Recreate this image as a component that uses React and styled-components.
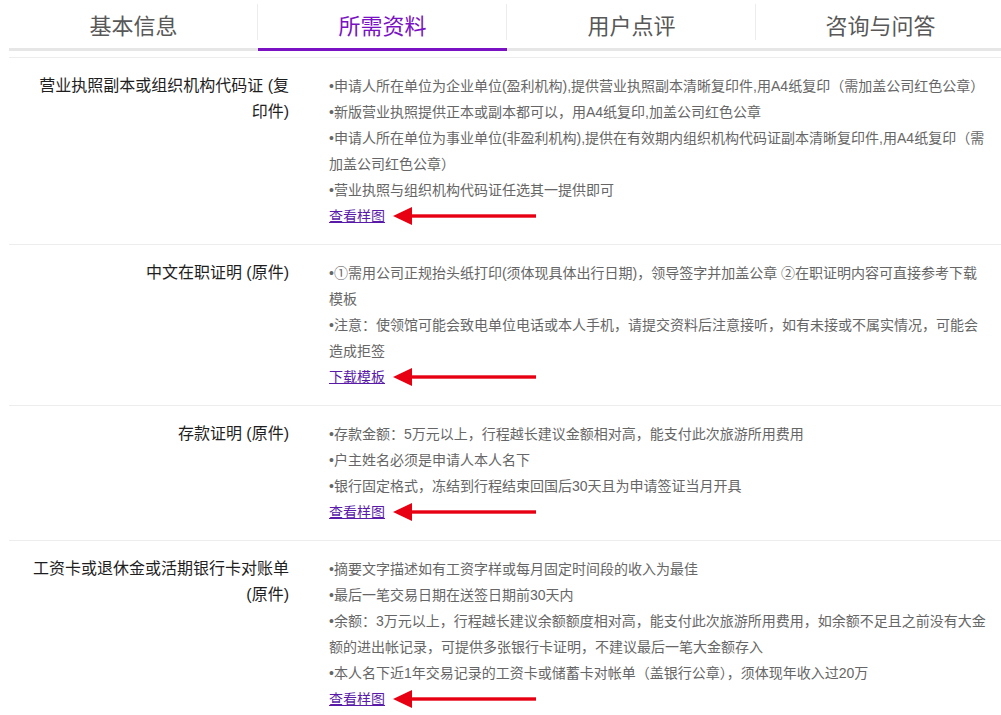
import React from "react";
import styled, { createGlobalStyle } from "styled-components";

const Global = createGlobalStyle`
  html, body { margin: 0; padding: 0; background: #fff; overflow-x: hidden; }
  body { font-family: "Liberation Sans", "Noto Sans CJK SC", sans-serif; }
`;

const Page = styled.div`
  padding-left: 9px;
  width: 996px;
`;

const Tabs = styled.div`
  display: grid;
  grid-template-columns: repeat(4, 1fr);
`;

const Tab = styled.div`
  position: relative;
  height: 48px;
  display: flex;
  align-items: center;
  justify-content: center;
  font-size: 22px;
  color: ${(p) => (p.$active ? "#7a12c4" : "#585858")};
  border-bottom: 3px solid ${(p) => (p.$active ? "#7a12c4" : "#e6e6e6")};
  font-family: "Noto Sans CJK SC", sans-serif;
  &::after {
    content: "";
    display: ${(p) => (p.$last ? "none" : "block")};
    position: absolute;
    right: 0;
    top: 4px;
    height: 36px;
    width: 1px;
    background: #ececec;
  }
`;

const List = styled.div`
  margin-top: 6px;
`;

const Row = styled.div`
  display: grid;
  grid-template-columns: 280px 658px;
  column-gap: 40px;
  padding: 15px 0;
  border-top: 1px solid #ededed;
`;

const Label = styled.div`
  padding-left: 20px;
  text-align: right;
  font-size: 16px;
  line-height: 26px;
  color: #1e1e1e;
`;

const Content = styled.div`
  font-size: 14px;
  line-height: 26px;
  color: #666;
`;

const Item = styled.div``;

const LinkLine = styled.div`
  display: flex;
  align-items: center;
  height: 26px;
`;

const Link = styled.a`
  color: #5a1aa8;
  text-decoration: underline;
  font-size: 14px;
  cursor: pointer;
`;

const Arrow = styled.svg`
  margin-left: 8px;
  display: block;
`;

const RedArrow = () => (
  <Arrow width="144" height="20" viewBox="0 0 144 20">
    <polygon points="0,10 19,1 19,19" fill="#e60012" />
    <rect x="18" y="8.3" width="125" height="3.4" fill="#e60012" />
  </Arrow>
);

const rows = [
  {
    label: "营业执照副本或组织机构代码证 (复印件)",
    items: [
      "•申请人所在单位为企业单位(盈利机构),提供营业执照副本清晰复印件,用A4纸复印（需加盖公司红色公章）",
      "•新版营业执照提供正本或副本都可以，用A4纸复印,加盖公司红色公章",
      "•申请人所在单位为事业单位(非盈利机构),提供在有效期内组织机构代码证副本清晰复印件,用A4纸复印（需加盖公司红色公章）",
      "•营业执照与组织机构代码证任选其一提供即可",
    ],
    link: "查看样图",
  },
  {
    label: "中文在职证明 (原件)",
    items: [
      "•①需用公司正规抬头纸打印(须体现具体出行日期)，领导签字并加盖公章 ②在职证明内容可直接参考下载模板",
      "•注意：使领馆可能会致电单位电话或本人手机，请提交资料后注意接听，如有未接或不属实情况，可能会造成拒签",
    ],
    link: "下载模板",
  },
  {
    label: "存款证明 (原件)",
    items: [
      "•存款金额：5万元以上，行程越长建议金额相对高，能支付此次旅游所用费用",
      "•户主姓名必须是申请人本人名下",
      "•银行固定格式，冻结到行程结束回国后30天且为申请签证当月开具",
    ],
    link: "查看样图",
  },
  {
    label: "工资卡或退休金或活期银行卡对账单 (原件)",
    items: [
      "•摘要文字描述如有工资字样或每月固定时间段的收入为最佳",
      "•最后一笔交易日期在送签日期前30天内",
      "•余额：3万元以上，行程越长建议余额额度相对高，能支付此次旅游所用费用，如余额不足且之前没有大金额的进出帐记录，可提供多张银行卡证明，不建议最后一笔大金额存入",
      "•本人名下近1年交易记录的工资卡或储蓄卡对帐单（盖银行公章），须体现年收入过20万",
    ],
    link: "查看样图",
  },
];

const tabs = ["基本信息", "所需资料", "用户点评", "咨询与问答"];

export default function App() {
  return (
    <>
      <Global />
      <Page>
        <Tabs>
          {tabs.map((t, i) => (
            <Tab key={t} $active={i === 1} $last={i === tabs.length - 1}>
              {t}
            </Tab>
          ))}
        </Tabs>
        <List>
          {rows.map((r, i) => (
            <Row key={i}>
              <Label>{r.label}</Label>
              <Content>
                {r.items.map((it, j) => (
                  <Item key={j}>{it}</Item>
                ))}
                <LinkLine>
                  <Link>{r.link}</Link>
                  <RedArrow />
                </LinkLine>
              </Content>
            </Row>
          ))}
        </List>
      </Page>
    </>
  );
}
